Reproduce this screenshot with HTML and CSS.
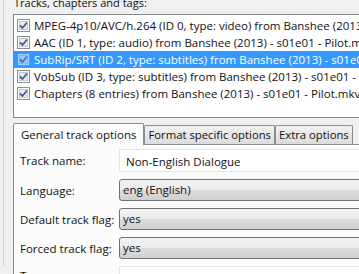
FILE: index.html
```html
<!DOCTYPE html>
<html lang="en">
<head>
  <meta charset="UTF-8">
  <title>Tracks, chapters and tags</title>
  <link rel="stylesheet" href="styles.css">
</head>
<body>
  <div class="frame">
    <div class="caption">Tracks, chapters and tags:</div>

    <!-- track list -->
    <div class="tracklist">
      <div class="track">
        <svg class="check" width="13" height="13" viewBox="0 0 13 13"><rect x="0.5" y="0.5" width="12" height="12" fill="#fff" stroke="#8e8f8f"/><rect x="2.5" y="2.5" width="8" height="8" fill="#e9ebee" stroke="#c4c8cf"/><path d="M3 6.5 L5.5 9 L10 3.5" fill="none" stroke="#4a5f8a" stroke-width="1.8"/></svg>
        <span>MPEG-4p10/AVC/h.264 (ID 0, type: video) from Banshee (2013) - s01e01 - Pilot.mkv</span>
      </div>
      <div class="track">
        <svg class="check" width="13" height="13" viewBox="0 0 13 13"><rect x="0.5" y="0.5" width="12" height="12" fill="#fff" stroke="#8e8f8f"/><rect x="2.5" y="2.5" width="8" height="8" fill="#e9ebee" stroke="#c4c8cf"/><path d="M3 6.5 L5.5 9 L10 3.5" fill="none" stroke="#4a5f8a" stroke-width="1.8"/></svg>
        <span>AAC (ID 1, type: audio) from Banshee (2013) - s01e01 - Pilot.mkv</span>
      </div>
      <div class="track selected">
        <svg class="check" width="13" height="13" viewBox="0 0 13 13"><rect x="0.5" y="0.5" width="12" height="12" fill="#fff" stroke="#8e8f8f"/><rect x="2.5" y="2.5" width="8" height="8" fill="#e9ebee" stroke="#c4c8cf"/><path d="M3 6.5 L5.5 9 L10 3.5" fill="none" stroke="#4a5f8a" stroke-width="1.8"/></svg>
        <span>SubRip/SRT (ID 2, type: subtitles) from Banshee (2013) - s01e01 - Pilot.mkv</span>
      </div>
      <div class="track">
        <svg class="check" width="13" height="13" viewBox="0 0 13 13"><rect x="0.5" y="0.5" width="12" height="12" fill="#fff" stroke="#8e8f8f"/><rect x="2.5" y="2.5" width="8" height="8" fill="#e9ebee" stroke="#c4c8cf"/><path d="M3 6.5 L5.5 9 L10 3.5" fill="none" stroke="#4a5f8a" stroke-width="1.8"/></svg>
        <span>VobSub (ID 3, type: subtitles) from Banshee (2013) - s01e01 - Pilot.mkv</span>
      </div>
      <div class="track">
        <svg class="check" width="13" height="13" viewBox="0 0 13 13"><rect x="0.5" y="0.5" width="12" height="12" fill="#fff" stroke="#8e8f8f"/><rect x="2.5" y="2.5" width="8" height="8" fill="#e9ebee" stroke="#c4c8cf"/><path d="M3 6.5 L5.5 9 L10 3.5" fill="none" stroke="#4a5f8a" stroke-width="1.8"/></svg>
        <span>Chapters (8 entries) from Banshee (2013) - s01e01 - Pilot.mkv <span class="marker">(</span></span>
      </div>
    </div>

    <!-- tabs -->
    <div class="tabbar">
      <div class="tab active">General track options</div>
      <div class="tab">Format specific options</div>
      <div class="tab">Extra options</div>
    </div>
    <div class="pane">
      <div class="form">
        <label>Track name:</label>
        <div class="textbox">Non-English Dialogue</div>
        <label>Language:</label>
        <div class="combo">eng (English)</div>
        <label>Default track flag:</label>
        <div class="combo">yes</div>
        <label>Forced track flag:</label>
        <div class="combo">yes</div>
        <label class="top">Tags:</label>
        <div class="textbox tall"></div>
      </div>
    </div>
  </div>
</body>
</html>
```

FILE: styles.css
```css
body {
  margin: 0;
  background: #f0f0f0;
  font-family: "Open Sans", sans-serif;
  font-size: 11px;
  color: #111;
  width: 359px;
  height: 274px;
  overflow: hidden;
}
.frame {
  margin-left: 3px;
  border-left: 1px solid #d0d0d0;
  padding-left: 9px;
  height: 274px;
}
.caption {
  margin-top: -8px;
  height: 22px;
  line-height: 21px;
  padding-left: 1px;
  white-space: nowrap;
}
.tracklist {
  width: 420px;
  height: 100px;
  background: #fff;
  border: 1px solid #828790;
  padding-top: 2px;
  box-sizing: content-box;
}
.track {
  display: flex;
  align-items: center;
  gap: 4px;
  height: 17px;
  padding-left: 3px;
  white-space: nowrap;
  font-size: 11.5px;
}
.track.selected {
  background: #3399ff;
  color: #fff;
}
.track.selected .check {
  opacity: 0.55;
}
.check {
  flex: none;
}
.marker {
  color: #c0392b;
}
/* tab strip */
.tabbar {
  display: flex;
  align-items: flex-end;
  margin-top: 5px;
  height: 21px;
  white-space: nowrap;
}
.tab {
  height: 18px;
  line-height: 18px;
  padding: 0 3px;
  border: 1px solid #898c95;
  border-bottom: none;
  border-radius: 2px 2px 0 0;
  background: linear-gradient(#f2f2f2, #dcdcdc);
  font-size: 11.3px;
}
.tab.active {
  height: 21px;
  line-height: 21px;
  padding: 0 7px 0 7px;
  background: #fcfcfc;
  margin-bottom: -1px;
  position: relative;
  z-index: 1;
  font-size: 11.5px;
}
.pane {
  width: 420px;
  height: 140px;
  border: 1px solid #898c95;
  background: #fcfcfc;
  padding: 4px 0 0 6px;
}
.form {
  display: grid;
  grid-template-columns: 99px 300px;
  row-gap: 7px;
  align-items: center;
  font-size: 11.5px;
}
.form label {
  white-space: nowrap;
}
.form label.top {
  align-self: start;
  margin-top: 2px;
}
.textbox {
  height: 23px;
  line-height: 23px;
  padding-left: 6px;
  border: 1px solid #e2e3ea;
  background: #fff;
  box-sizing: border-box;
}
.textbox.tall {
  height: 60px;
}
.combo {
  height: 22px;
  line-height: 20px;
  padding-left: 3px;
  border: 1px solid #707070;
  border-radius: 3px;
  background: linear-gradient(#f2f2f2 0%, #ebebeb 50%, #dddddd 51%, #cfcfcf 100%);
  box-sizing: border-box;
}
```
